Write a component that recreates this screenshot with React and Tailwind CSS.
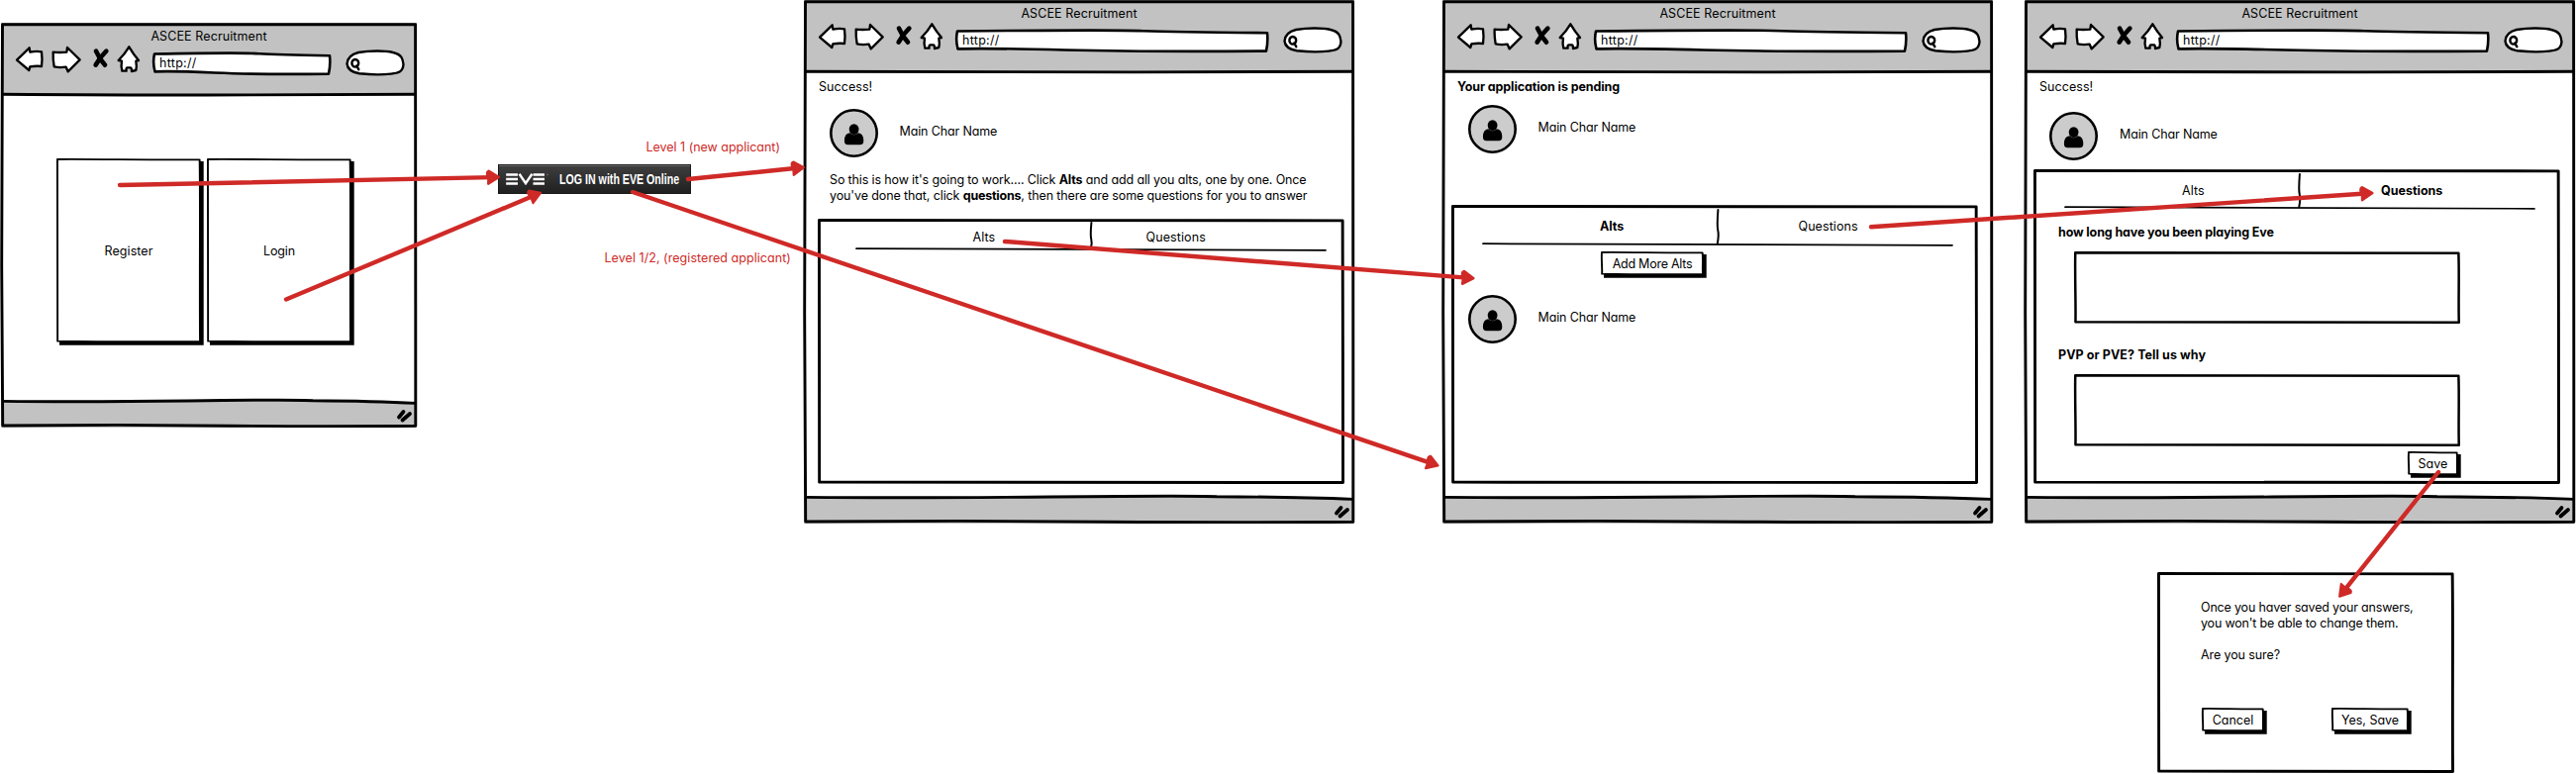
import React from "react";

/* Hand-drawn rectangle outline, stretched over its parent. */
function Sketch({ w, h, s = 2.9, fill = "none" }) {
  const a = s / 2;
  const d = [
    `M${a},${a}`,
    `C${w * 0.3},${a - 0.3} ${w * 0.6},${a + 0.8} ${w - a - 0.4},${a + 0.4}`,
    `C${w - a + 0.4},${h * 0.3} ${w - a - 0.6},${h * 0.7} ${w - a},${h - a}`,
    `C${w * 0.7},${h - a + 0.3} ${w * 0.4},${h - a + 0.5} ${a + 0.2},${h - a - 0.4}`,
    `C${a + 0.6},${h * 0.7} ${a - 0.5},${h * 0.4} ${a},${a}Z`,
  ].join(" ");
  return (
    <svg className="pointer-events-none absolute inset-0 overflow-visible" width={w} height={h}>
      <path d={d} fill={fill} stroke="#000" strokeWidth={s} strokeLinejoin="round" />
    </svg>
  );
}

function NavIcons() {
  return (
    <svg className="mt-[22px] shrink-0" width="128" height="30" viewBox="45 135 384 90" fill="#fff" stroke="#000" strokeWidth="7" strokeLinejoin="round" strokeLinecap="round">
      <path d="M51 182 L89 145 L91 158 Q110 154 126 157 Q129 180 126 201 Q110 199 91 202 L88 213Z" />
      <path d="M161 158 Q180 160 202 158 L204 144 L242 181 L206 217 L200 203 Q180 206 164 202 Q160 180 161 158Z" />
      <path d="M391 142 Q404 164 420 183 L412 185 Q415 200 412 213 L399 216 Q399 204 394 205 L386 205 Q381 206 383 215 L370 215 Q366 200 369 185 L359 183 Q378 164 391 142Z" />
      <g strokeWidth="14">
        <path d="M291 155 Q302 180 318 197" />
        <path d="M322 155 Q304 172 290 197" />
      </g>
    </svg>
  );
}

function Browser({ w, h, children, className }) {
  const u = w - 240;
  return (
    <section className={`absolute flex flex-col ${className}`}>
      <header className="flex h-[73px] shrink-0 flex-col bg-[#c2c2c2]">
        <h1 className="-mb-[23px] pt-[5px] text-center leading-[18px] tracking-[0.1px]">ASCEE Recruitment</h1>
        <div className="flex pl-[14px] pr-[12px]">
          <NavIcons />
          <div className="relative mt-[30px] ml-[11px] flex h-[23px] flex-1 items-center pl-[7px]">
            <svg className="absolute inset-0 overflow-visible" width={u} height="23">
              <path
                d={`M2 1.5 Q${u * 0.5} 0 ${u * 0.6} 1.2 T${u - 1} 3.2 Q${u} 12 ${u - 2} 21.6 Q${u * 0.6} 22.5 ${u * 0.35} 20.5 T2.5 19.4 Q0 10 2 1.5Z`}
                fill="#fff"
                stroke="#000"
                strokeWidth="2.6"
                strokeLinejoin="round"
              />
            </svg>
            <span className="relative -mt-[1px] tracking-[0.3px]">http://</span>
          </div>
          <svg className="mt-[28px] ml-[15px] shrink-0 overflow-visible" width="60" height="26" fill="#fff" stroke="#000" strokeWidth="2.4" strokeLinecap="round">
            <path d="M13 2 C25 0 40 0 48 2 C57 4 58 9 58.5 14 C58 22 53 23 46 23.6 C35 25 25 24.5 14 23.3 C6 22 2 18 1.5 13.5 C2 6 7 3.5 13 2Z" />
            <ellipse cx="9.8" cy="12.8" rx="3.4" ry="3.8" />
            <path d="M11.2 15.5 L13.3 19.2" />
          </svg>
        </div>
      </header>
      <main className="flex flex-1 flex-col bg-white">{children}</main>
      <footer className="h-[26px] shrink-0 bg-[#c2c2c2]" />
      <svg className="pointer-events-none absolute inset-0 overflow-visible" width={w} height={h} fill="none" stroke="#000" strokeWidth="2.9" strokeLinejoin="round">
        <path d={`M1.5 1.7 H${w - 1.4} Q${w - 1.8} ${h * 0.4} ${w - 1.2} ${h * 0.7} L${w - 1.2} ${h - 1.8} Q${w * 0.8} ${h - 1} ${w * 0.55} ${h - 1.8} T${w * 0.28} ${h - 2.6} T1.7 ${h - 2} Q1 ${h * 0.7} 0.7 ${h * 0.6} Q0.8 ${h * 0.3} 1.5 1.7Z`} />
        <path d={`M1 72.3 Q${w * 0.4} 73.4 ${w * 0.6} 72.9 T${w - 2} 72.3`} />
        <path d={`M1 ${h - 26.6} Q${w * 0.2} ${h - 25.6} ${w * 0.45} ${h - 27} T${w * 0.75} ${h - 27.3} Q${w * 0.9} ${h - 26.8} ${w - 1} ${h - 24.6}`} />
        <g strokeWidth="3.8" strokeLinecap="round">
          <path d={`M${w - 18} ${h - 10.5} L${w - 13.5} ${h - 16}`} />
          <path d={`M${w - 14.5} ${h - 7.5} L${w - 7} ${h - 14}`} />
        </g>
      </svg>
    </section>
  );
}

function Avatar() {
  return (
    <svg className="shrink-0" width="49" height="49">
      <ellipse cx="24.5" cy="24.5" rx="23.2" ry="23.2" fill="#ccc" stroke="#000" strokeWidth="2.6" />
      <ellipse cx="24.6" cy="20.6" rx="4.9" ry="5.4" />
      <path d="M20.3 24.3 Q15 25 14.9 32 Q14.8 36.3 18.5 36.3 H30.7 Q34.4 36.3 34.3 32 Q34.2 25 28.9 24.3 Q24.6 28.4 20.3 24.3Z" />
    </svg>
  );
}

function Person({ className }) {
  return (
    <div className={`flex gap-[22px] ${className}`}>
      <Avatar />
      <span className="mt-[14px] leading-[18px] tracking-[-0.13px]">Main Char Name</span>
    </div>
  );
}

/* Button with a solid offset shadow; w and h cover the face only. */
function Button({ w, h, children, className }) {
  return (
    <button className={`relative flex shrink-0 items-center justify-center ${className}`}>
      <svg className="absolute inset-0 overflow-visible" width={w} height={h}>
        <path d={`M3 3 H${w + 2.7} V${h + 2.7} H3Z`} />
      </svg>
      <Sketch w={w} h={h} s={1.9} fill="#fff" />
      <span className="relative mt-[2px]">{children}</span>
    </button>
  );
}

/* Tab strip: divider at dx, underline from x1 to x2. */
function TabLines({ dx, y1, y2, x1, x2 }) {
  return (
    <svg className="pointer-events-none absolute inset-0 overflow-visible" width="530" height="44" fill="none" stroke="#000" strokeLinecap="round">
      <path strokeWidth="2" d={`M${dx + 0.4} ${y1} Q${dx - 0.8} ${(y1 + y2) / 2} ${dx + 0.3} ${(y1 + y2) / 2 + 4} T${dx - 0.2} ${y2}`} />
      <path strokeWidth="1.7" d={`M${x1} ${y2 + 0.2} Q${(x1 + x2) / 2} ${y2 + 0.4} ${x2} ${y2 + 1.8}`} />
    </svg>
  );
}

function Arrow({ x1, y1, x2, y2 }) {
  const ang = (Math.atan2(y2 - y1, x2 - x1) * 180) / Math.PI;
  const len = Math.hypot(x2 - x1, y2 - y1);
  return (
    <g transform={`translate(${x1} ${y1}) rotate(${ang})`}>
      <path d={`M0 0 H${len - 8}`} stroke="#cf2a27" strokeWidth="4.4" strokeLinecap="round" />
      <path
        d={`M${len - 1} 0 L${len - 11} -6.6 Q${len - 14} -6 ${len - 12.5} -1 L${len - 11.8} 2 L${len - 12} 6.6Z`}
        fill="#cf2a27"
        stroke="#cf2a27"
        strokeWidth="2.2"
        strokeLinejoin="round"
      />
    </g>
  );
}

export default function App() {
  return (
    <div className="relative h-[782px] w-[2602px] overflow-hidden bg-white font-['Inter','Noto_Sans',sans-serif] text-[12.5px] leading-[16px] [font-weight:440] text-black [font-feature-settings:'cv11','calt'_0]">
      <Browser w={420} h={409} className="top-[23px] left-[1px] h-[409px] w-[420px]">
        <div className="flex gap-[6px] pt-[64px] pl-[56px]">
          <Button w={146} h={186} className="h-[186px] w-[146px]">
            <span className="tracking-[0.08px]">Register</span>
          </Button>
          <Button w={146} h={186} className="h-[186px] w-[146px]">
            <span className="tracking-[-0.12px]">Login</span>
          </Button>
        </div>
      </Browser>

      <div className="absolute top-[166px] left-[503px] flex h-[30px] w-[195px] items-center border border-[#1b1b1b] bg-linear-to-b from-[#3f3f3f] to-[#202020] shadow-[inset_0_1px_0_#666]">
        <svg className="ml-[7px] shrink-0" width="47" height="12" fill="none" stroke="#fff" strokeWidth="2.4">
          <path d="M0.2 1.5 H12 M0.2 6 H12 M0.2 10.5 H12" />
          <path d="M13.6 0.8 L20 10.2 L26.4 0.8" />
          <path d="M27.5 1.5 H39 M27.5 6 H39 M27.5 10.5 H39" />
          <circle cx="42" cy="1.5" r="0.5" stroke="#777" strokeWidth="0.8" />
        </svg>
        <div className="h-full w-px bg-[#666]" />
        <span className="ml-[7px] origin-left scale-x-[0.76] font-['Liberation_Sans',sans-serif] text-[14px] font-bold whitespace-nowrap text-white">
          LOG IN with EVE Online
        </span>
      </div>
      <p className="absolute top-[141px] left-[652.5px] tracking-[-0.02px] whitespace-nowrap text-[#cf2a27]">Level 1 (new applicant)</p>
      <p className="absolute top-[253px] left-[610.5px] tracking-[0.05px] whitespace-nowrap text-[#cf2a27]">Level 1/2, (registered applicant)</p>

      <Browser w={556} h={529} className="top-0 left-[812px] h-[529px] w-[556px]">
        <p className="mt-[7px] pl-[15px] tracking-[0.05px]">Success!</p>
        <Person className="mt-[14px] ml-[25.5px]" />
        <p className="mt-[15px] ml-[26px] tracking-[-0.14px] whitespace-nowrap">
          So this is how it's going to work.... Click <b>Alts</b> and add all you alts, one by one. Once
          <br />
          <span className="tracking-[-0.11px]">
            you've done that, click <b className="tracking-[-0.22px]">questions</b>, then there are some questions for you to answer
          </span>
        </p>
        <div className="relative mt-[15px] ml-[14px] h-[268px] w-[532px]">
          <Sketch w={532} h={268} />
          <TabLines dx={276} y1={4} y2={30} x1={39} x2={513} />
          <div className="flex pt-[11px] pl-[156.5px] tracking-[0.1px]">
            <span className="w-[175px]">Alts</span>
            <span>Questions</span>
          </div>
        </div>
      </Browser>

      <Browser w={556} h={529} className="top-0 left-[1457px] h-[529px] w-[556px]">
        <p className="mt-[7px] pl-[15px] font-bold tracking-[-0.1px] whitespace-nowrap">Your application is pending</p>
        <Person className="mt-[10px] ml-[25.5px]" />
        <div className="relative mt-[52px] ml-[9px] h-[282px] w-[532px]">
          <Sketch w={532} h={282} />
          <TabLines dx={269} y1={5} y2={39} x1={32} x2={506} />
          <div className="flex pt-[14px] pl-[150px]">
            <b className="w-[200.5px] tracking-[-0.05px]">Alts</b>
            <span className="tracking-[0.08px]">Questions</span>
          </div>
          <Button w={104} h={24} className="mt-[17px] ml-[151px] h-[24px] w-[104px]">
            <span className="tracking-[-0.25px]">Add More Alts</span>
          </Button>
          <Person className="mt-[20px] ml-[16.5px]" />
        </div>
      </Browser>

      <Browser w={556} h={529} className="top-0 left-[2045px] h-[529px] w-[556px]">
        <p className="mt-[7px] pl-[15px] tracking-[0.05px]">Success!</p>
        <Person className="mt-[17px] ml-[25px]" />
        <div className="relative mt-[9px] ml-[9px] h-[318px] w-[532px]">
          <Sketch w={532} h={318} />
          <TabLines dx={268.5} y1={5} y2={38} x1={32} x2={506} />
          <div className="flex pt-[14px] pl-[150px]">
            <span className="w-[201px] tracking-[0.1px]">Alts</span>
            <b className="tracking-[0px]">Questions</b>
          </div>
          <label className="mt-[26px] ml-[25px] block font-bold tracking-[-0.13px]">how long have you been playing Eve</label>
          <div className="relative mt-[11px] ml-[41px] h-[73px] w-[390px]">
            <Sketch w={390} h={73} s={2.5} />
          </div>
          <label className="mt-[24px] ml-[25px] block font-bold tracking-[0.08px]">PVP or PVE? Tell us why</label>
          <div className="relative mt-[11px] ml-[41px] h-[73px] w-[390px]">
            <Sketch w={390} h={73} s={2.5} />
          </div>
          <Button w={51} h={24} className="mt-[5px] ml-[378px] h-[24px] w-[51px]">
            <span className="tracking-[0.05px]">Save</span>
          </Button>
        </div>
      </Browser>

      <div className="absolute top-[578px] left-[2179px] h-[203px] w-[300px]">
        <Sketch w={300} h={203} />
        <p className="pt-[28px] pl-[44px] tracking-[-0.18px] whitespace-nowrap">
          Once you haver saved your answers,
          <br />
          you won't be able to change them.
          <br />
          <br />
          <span className="tracking-[-0.1px]">Are you sure?</span>
        </p>
        <div className="flex gap-[68px] pt-[45px] pl-[45px]">
          <Button w={63} h={24} className="h-[24px] w-[63px]">
            <span className="tracking-[0.02px]">Cancel</span>
          </Button>
          <Button w={78} h={24} className="h-[24px] w-[78px]">
            <span className="tracking-[-0.02px]">Yes, Save</span>
          </Button>
        </div>
      </div>

      <svg className="pointer-events-none absolute inset-0" width="2602" height="782" fill="none">
        <Arrow x1={121} y1={187} x2={505} y2={179} />
        <Arrow x1={289} y1={302.5} x2={547} y2={194.5} />
        <Arrow x1={695} y1={181} x2={813} y2={169} />
        <Arrow x1={639} y1={194} x2={1453.5} y2={470.7} />
        <Arrow x1={1015} y1={244} x2={1489.5} y2={281.3} />
        <Arrow x1={1890} y1={229.3} x2={2397.5} y2={195} />
        <Arrow x1={2463} y1={477} x2={2362.5} y2={603.5} />
      </svg>
    </div>
  );
}
